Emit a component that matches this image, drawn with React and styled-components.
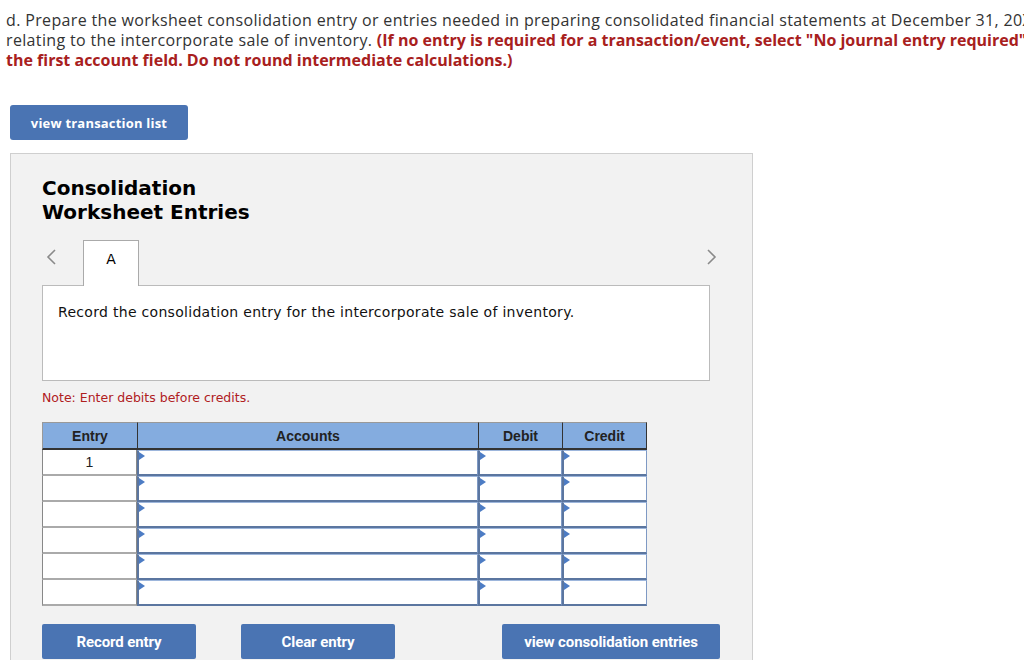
import styled, { createGlobalStyle } from 'styled-components';

const GlobalStyle = createGlobalStyle`
  html, body {
    margin: 0;
    padding: 0;
    background: #fff;
    overflow: hidden;
  }
`;

const rows = ['1', '', '', '', '', ''];

function Chevron({ dir }) {
  const d = dir === 'left' ? 'M10 2 L3 9 L10 16' : 'M3 2 L10 9 L3 16';
  return (
    <svg width="13" height="18" viewBox="0 0 13 18">
      <path d={d} fill="none" stroke="#8a8a8a" strokeWidth="1.6" />
    </svg>
  );
}

export default function App() {
  return (
    <Page>
      <GlobalStyle />
      <Prompt>
        d. Prepare the worksheet consolidation entry or entries needed in preparing consolidated financial statements at December 31, 20X8, for the intercorporate sale.
        <br />
        relating to the intercorporate sale of inventory. <Red>(If no entry is required for a transaction/event, select "No journal entry required" in</Red>
        <br />
        <Red>the first account field. Do not round intermediate calculations.)</Red>
      </Prompt>

      <BlueButton $width="178px">view transaction list</BlueButton>

      <Panel>
        <Title>
          Consolidation
          <br />
          Worksheet Entries
        </Title>

        <TabRow>
          <Arrow><Chevron dir="left" /></Arrow>
          <Tab>A</Tab>
          <Spacer />
          <Arrow $right><Chevron dir="right" /></Arrow>
        </TabRow>
        <Question>Record the consolidation entry for the intercorporate sale of inventory.</Question>

        <Note>Note: Enter debits before credits.</Note>

        <Grid>
          <Head>Entry</Head>
          <Head>Accounts</Head>
          <Head>Debit</Head>
          <Head $last>Credit</Head>
          {rows.map((entry, i) => (
            <Row key={i}>
              <EntryCell>{entry}</EntryCell>
              <InputCell />
              <InputCell />
              <InputCell />
            </Row>
          ))}
        </Grid>

        <Actions>
          <Small $width="154px">Record entry</Small>
          <Small $width="154px" $gap="45px">Clear entry</Small>
          <Small $width="218px" $gap="107px">view consolidation entries</Small>
        </Actions>
      </Panel>
    </Page>
  );
}

const Page = styled.div`
  padding: 10px 0 0 0;
  width: 1024px;
  height: 660px;
  overflow: hidden;
`;

const Prompt = styled.div`
  margin-left: 6px;
  font-family: 'Open Sans', 'Liberation Sans', sans-serif;
  font-size: 16px;
  line-height: 20px;
  color: #333;
  white-space: nowrap;
  letter-spacing: 0.35px;
`;

const Red = styled.span`
  color: #a8201d;
  font-weight: 700;
  letter-spacing: 0;
`;

const BlueButton = styled.div`
  margin: 35px 0 0 10px;
  width: ${p => p.$width};
  height: 35px;
  border-radius: 3px;
  background: #4a74b3;
  color: #fff;
  font-family: 'Open Sans', 'Liberation Sans', sans-serif;
  font-weight: 700;
  font-size: 13px;
  letter-spacing: 0.2px;
  display: flex;
  align-items: center;
  justify-content: center;
`;

const Panel = styled.div`
  margin: 13px 0 0 10px;
  width: 743px;
  height: 520px;
  box-sizing: border-box;
  border: 1px solid #cfcfcf;
  background: #f2f2f2;
  padding: 22px 0 0 31px;
`;

const Title = styled.div`
  font-family: 'DejaVu Sans', Verdana, sans-serif;
  font-weight: 700;
  font-size: 20px;
  line-height: 24px;
  color: #000;
`;

const TabRow = styled.div`
  margin-top: 16px;
  width: 676px;
  display: flex;
  align-items: flex-end;
  height: 46px;
`;

const Arrow = styled.div`
  width: 41px;
  height: 46px;
  display: flex;
  justify-content: ${p => (p.$right ? 'flex-end' : 'flex-start')};
  padding: 8px 0 0 3px;
  box-sizing: border-box;
`;

const Spacer = styled.div`
  flex: 1;
`;

const Tab = styled.div`
  position: relative;
  z-index: 1;
  width: 56px;
  height: 46px;
  box-sizing: border-box;
  background: #fff;
  border: 1px solid #aaa;
  border-bottom: none;
  text-align: center;
  padding-top: 10px;
  font-family: 'DejaVu Sans', Verdana, sans-serif;
  font-size: 14px;
  color: #000;
`;

const Question = styled.div`
  margin-top: -1px;
  width: 668px;
  height: 96px;
  box-sizing: border-box;
  background: #fff;
  border: 1px solid #bbb;
  padding: 17px 15px 0;
  font-family: 'DejaVu Sans', Verdana, sans-serif;
  font-size: 14px;
  line-height: 18px;
  letter-spacing: 0.3px;
  color: #111;
`;

const Note = styled.div`
  margin-top: 9px;
  font-family: 'DejaVu Sans', Verdana, sans-serif;
  font-size: 12.5px;
  line-height: 16px;
  color: #b0201e;
`;

const Grid = styled.div`
  margin-top: 16px;
  width: 605px;
  display: grid;
  grid-template-columns: 95px 341px 84px 85px;
  grid-auto-rows: 26px;
  grid-template-rows: 28px;
  border-right: 1px solid #999;
  box-sizing: border-box;
`;

const Head = styled.div`
  background: #84acdf;
  border-top: 1px solid #999;
  border-left: 1px solid #333;
  border-right: ${p => (p.$last ? '1px solid #333' : 'none')};
  border-bottom: 2px solid #333;
  &:first-child {
    border-left: 1px solid #999;
  }
  display: flex;
  align-items: center;
  justify-content: center;
  font-family: 'Liberation Sans', Arial, sans-serif;
  font-weight: 700;
  font-size: 14px;
  color: #222;
`;

const Row = styled.div`
  display: contents;
`;

const EntryCell = styled.div`
  background: #fff;
  border-left: 1px solid #888;
  border-right: 1px solid #888;
  border-bottom: 2px solid #aaa;
  display: flex;
  align-items: center;
  justify-content: center;
  font-family: 'Liberation Sans', Arial, sans-serif;
  font-size: 14px;
  color: #222;
`;

const InputCell = styled.div`
  position: relative;
  background: #fff;
  border-left: 2px solid #5b76a0;
  border-bottom: 2px solid #5b76a0;
  border-right: 1px solid #7e99c4;
  border-top: 1px solid #9db6dc;
  box-sizing: border-box;
  &::before {
    content: '';
    position: absolute;
    left: 0;
    top: 1px;
    border-left: 6px solid #4d7cc4;
    border-top: 4px solid transparent;
    border-bottom: 4px solid transparent;
  }
`;

const Actions = styled.div`
  margin-top: 18px;
  display: flex;
`;

const Small = styled.div`
  margin-left: ${p => p.$gap || '0'};
  width: ${p => p.$width};
  height: 35px;
  border-radius: 2px;
  background: #4a74b3;
  color: #fff;
  font-family: 'Roboto', 'Liberation Sans', sans-serif;
  font-weight: 700;
  font-size: 15px;
  letter-spacing: -0.1px;
  display: flex;
  align-items: center;
  justify-content: center;
`;
